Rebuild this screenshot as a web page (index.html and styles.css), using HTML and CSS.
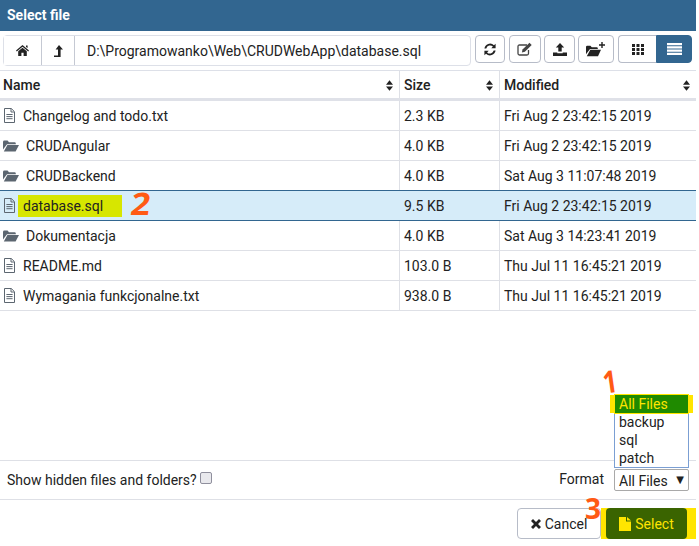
FILE: index.html
```html
<!DOCTYPE html>
<html lang="en">
<head>
<meta charset="utf-8">
<title>Select file</title>
<link rel="stylesheet" href="styles.css">
</head>
<body>
<svg class="defs" width="0" height="0">
  <symbol id="i-file" viewBox="0 0 13 15"><path d="M1.5.5h6.8l3.2 3.2v10.8h-10zM8 .8v3.2h3.2M3.400 6.500h6.200M3.400 8.600h6.200M3.400 10.700h6.200" fill="none" stroke="currentColor"/></symbol>
  <symbol id="i-folder" viewBox="0 0 16 12"><path d="M0 2Q0 .6 1.400.6h3.200l1.400 1.600h5.600q1.200 0 1.200 1.200v.8H4L0 9.600zM4.400 5H16l-3.400 6.600H.8z" fill="currentColor"/></symbol>
  <symbol id="i-sort" viewBox="0 0 8 12"><path d="M4 0l4 5H0zM4 12L0 7h8z" fill="currentColor"/></symbol>
</svg>
<main class="dialog">
  <header class="title">Select file</header>
  <div class="toolbar">
    <div class="path">
      <button class="seg home" aria-label="Home"><svg width="13" height="11" viewBox="0 0 13 11"><path d="M6.500 0L13 5.600l-.8.9-5.700-4.800L.8 6.500 0 5.600zM10 .5h1.600v2.600L10 2zM2.200 6.300l4.300-3.600 4.300 3.600V11H7.600V7.800H5.400V11H2.200z" fill="#222"/></svg></button>
      <button class="seg" aria-label="Up"><svg width="9" height="12" viewBox="0 0 9 12"><path d="M5 0l4 4.400H6.600V12H0v-1.600h4V4.400H1.600z" fill="#222"/></svg></button>
      <span class="path-text">D:\Programowanko\Web\CRUDWebApp\database.sql</span>
    </div>
    <button class="btn b-ref" aria-label="Refresh"><svg width="14" height="13" viewBox="0 0 14 13"><path d="M1.400 5.400A5.700 5.700 0 0 1 11 2.200L12.600.8v4.400H8.300l1.600-1.600A3.900 3.900 0 0 0 3.300 5.400zM12.600 7.600A5.700 5.700 0 0 1 3 10.800l-1.600 1.400V7.800h4.300L4.100 9.400A3.900 3.900 0 0 0 10.700 7.600z" fill="#222"/></svg></button>
    <button class="btn b-edit" aria-label="Edit"><svg width="16" height="14" viewBox="0 0 16 14"><path d="M10 3H2.500Q1 3 1 4.500v7Q1 13 2.500 13h7.500Q11.500 13 11.500 11.500V8" fill="none" stroke="#444" stroke-width="1.300"/><path d="M5.500 7.500L12.500.8l2.200 2.200-6.800 6.800-3 .8z" fill="#444"/></svg></button>
    <button class="btn b-up" aria-label="Upload"><svg width="14" height="13" viewBox="0 0 14 13"><path d="M7 0l4.200 4.400H8.700v4H5.300v-4H2.800zM0 9.400h4.300v.8h5.400v-.8H14V13H0z" fill="#222"/></svg></button>
    <button class="btn b-new" aria-label="New folder"><svg width="20" height="15" viewBox="0 0 20 15"><path d="M0 5Q0 3.800 1.200 3.800h3.200L5.800 5.200h5q1 0 1 1v.7H4L0 12.300zM4.300 7.800H15l-3 6.400H.8z" fill="#222"/><path d="M15.300 0h1.400v2.300H19v1.400h-2.300V6h-1.400V3.700H13V2.300h2.300z" fill="#222"/></svg></button>
    <div class="toggle">
      <button class="tg" aria-label="Grid"><svg width="12" height="11" viewBox="0 0 12 11"><path d="M0 0h3v3H0zM4.500 0h3v3h-3zM9 0h3v3H9zM0 4h3v3H0zM4.500 4h3v3h-3zM9 4h3v3H9zM0 8h3v3H0zM4.500 8h3v3h-3zM9 8h3v3H9z" fill="#222"/></svg></button>
      <button class="tg on" aria-label="List"><svg width="15" height="12" viewBox="0 0 15 12"><path d="M0 0h15v2.300H0zM0 3.200h15v2.300H0zM0 6.500h15v2.300H0zM0 9.700h15V12H0z" fill="#fff"/></svg></button>
    </div>
  </div>
  <div class="table">
    <div class="row head">
      <div class="c name">Name<svg class="sort"><use href="#i-sort"/></svg></div>
      <div class="c size">Size<svg class="sort"><use href="#i-sort"/></svg></div>
      <div class="c mod">Modified<svg class="sort"><use href="#i-sort"/></svg></div>
    </div>
    <div class="row"><div class="c name"><svg class="fi"><use href="#i-file"/></svg>Changelog and todo.txt</div><div class="c size">2.3 KB</div><div class="c mod">Fri Aug 2 23:42:15 2019</div></div>
    <div class="row"><div class="c name"><svg class="fo"><use href="#i-folder"/></svg>CRUDAngular</div><div class="c size">4.0 KB</div><div class="c mod">Fri Aug 2 23:42:15 2019</div></div>
    <div class="row"><div class="c name"><svg class="fo"><use href="#i-folder"/></svg>CRUDBackend</div><div class="c size">4.0 KB</div><div class="c mod">Sat Aug 3 11:07:48 2019</div></div>
    <div class="row sel"><div class="c name"><svg class="fi"><use href="#i-file"/></svg><span class="hl">database.sql</span><span class="mark m2">2</span></div><div class="c size">9.5 KB</div><div class="c mod">Fri Aug 2 23:42:15 2019</div></div>
    <div class="row"><div class="c name"><svg class="fo"><use href="#i-folder"/></svg>Dokumentacja</div><div class="c size">4.0 KB</div><div class="c mod">Sat Aug 3 14:23:41 2019</div></div>
    <div class="row"><div class="c name"><svg class="fi"><use href="#i-file"/></svg>README.md</div><div class="c size">103.0 B</div><div class="c mod">Thu Jul 11 16:45:21 2019</div></div>
    <div class="row"><div class="c name"><svg class="fi"><use href="#i-file"/></svg>Wymagania funkcjonalne.txt</div><div class="c size">938.0 B</div><div class="c mod">Thu Jul 11 16:45:21 2019</div></div>
  </div>
  <div class="options">
    <label class="hidden-opt">Show hidden files and folders?<span class="check"></span></label>
    <div class="format">
      <span>Format</span>
      <div class="select">All Files<i class="caret">▼</i>
        <span class="mark m1">1</span>
        <ul class="list">
          <li class="cur">All Files</li><li>backup</li><li>sql</li><li>patch</li>
        </ul>
      </div>
    </div>
  </div>
  <footer class="foot">
    <button class="cancel"><svg width="10" height="10" viewBox="0 0 10 10"><path d="M2 0l3 3 3-3 2 2-3 3 3 3-2 2-3-3-3 3-2-2 3-3-3-3z" fill="#222"/></svg>Cancel</button>
    <div class="sel-wrap"><span class="mark m3">3</span><button class="select-btn"><svg width="12" height="14" viewBox="0 0 12 14"><path d="M0 0h7v4.500h5V14H0zM8 0l4 3.500H8z" fill="#ffe500"/></svg>Select</button></div>
  </footer>
</main>
</body>
</html>
```
FILE: styles.css
```css
* { box-sizing: border-box; }
html, body { margin: 0; padding: 0; background: #fff; }
body { font: 14px/20px Roboto, "Liberation Sans", sans-serif; color: #222; width: 699px; height: 546px; overflow: hidden; }
.defs { position: absolute; }
.dialog { width: 696px; height: 546px; display: flex; flex-direction: column; }
button { font: inherit; padding: 0; margin: 0; background: #fff; color: inherit; display: flex; align-items: center; justify-content: center; }

.title { height: 31px; flex: none; background: #326690; color: #fff; font-weight: 700; padding: 5px 7px; }

.toolbar { height: 40px; flex: none; display: flex; align-items: flex-start; padding: 4px 0 0 3px; border-bottom: 1px solid #dde0e8; }
.path { width: 468px; height: 31px; flex: none; display: flex; align-items: stretch; border: 1px solid #dde0e8; border-radius: 4px; }
.seg { width: 33px; border: 0; border-right: 1px solid #c5c9d3; }
.seg.home { width: 38px; }
.path-text { padding: 5px 12px; white-space: nowrap; }
.btn { height: 28px; flex: none; border: 1px solid #b7bcc8; border-radius: 4px; }
.b-ref { width: 30px; margin-left: 4px; }
.b-edit { width: 32px; margin-left: 4px; }
.b-up { width: 31px; margin-left: 3px; }
.b-new { width: 36px; margin-left: 3px; }
.toggle { display: flex; height: 28px; margin-left: 4px; }
.tg { width: 38px; border: 1px solid #b7bcc8; border-right: 0; border-radius: 4px 0 0 4px; }
.tg.on { width: 36px; background: #326690; border: 1px solid #326690; border-radius: 0 4px 4px 0; }

.table { flex: none; }
.row { display: flex; height: 30px; border-bottom: 1px solid #dee0e6; }
.row.head { height: 30px; border-bottom: 3px solid #dfe1e8; font-weight: 500; color: #222; }
.c { display: flex; align-items: center; padding: 0 4px; border-right: 1px solid #dee0e6; position: relative; white-space: nowrap; }
.name { width: 400px; padding-left: 3px; }
.size { width: 100px; }
.mod { width: 196px; border-right: 0; }
.sort { position: absolute; right: 6px; top: 9px; width: 7px; height: 11px; color: #222; }
.fi { width: 13px; height: 15px; margin-right: 7px; color: #5c6670; flex: none; }
.fo { width: 16px; height: 12px; margin-right: 7px; color: #5c6670; flex: none; }
.row.sel { background: #d6ecf9; border-bottom-color: #326690; box-shadow: 0 -1px 0 #326690; position: relative; }
.row.sel .c { border-right-color: transparent; }
.hl { background: #d7e600; margin-left: -5px; padding: 0 19px 0 5px; height: 22px; line-height: 22px; }

.mark { position: absolute; color: #ff5a14; font: 700 31px/30px "Open Sans", sans-serif; }
.m1 { left: -14px; top: -104px; transform: rotate(-8deg) scaleX(.8); }
.m2 { left: 132px; top: -3px; transform: skewX(-8deg) scaleX(1.1); }
.m3 { left: -16px; top: -15px; font-size: 28px; }

.options { margin-top: 149px; height: 40px; flex: none; display: flex; justify-content: space-between; align-items: center; padding: 0 7px; border-top: 1px solid #dee0e6; border-bottom: 1px solid #dee0e6; }
.hidden-opt { display: flex; align-items: center; }
.check { width: 12px; height: 12px; background: #e9e9ed; border: 1px solid #8f8f9d; border-radius: 2px; margin: -4px 0 0 3px; }
.format { display: flex; align-items: center; gap: 10px; margin-top: -2px; }
.select { position: relative; width: 75px; height: 22px; border: 1px solid #a9a9a9; border-radius: 2px; padding: 1px 4px; margin-top: 2px; background: #fff; }
.caret { position: absolute; right: 4px; top: 1px; font: 10px/18px "DejaVu Sans", sans-serif; color: #222; }
.list { position: absolute; left: -1px; bottom: 22px; width: 75px; margin: 0; padding: 0; list-style: none; background: #fff; border: 1px solid #7b9fd3; line-height: 18px; }
.list li { padding: 0 4px; height: 18px; }
.list .cur { background: #1f8a00; color: #ffe500; outline: 1px solid #ffe500; box-shadow: -5px 0 0 #ffe500, 5px 0 0 #ffe500; }

.foot { height: 46px; flex: none; display: flex; justify-content: flex-end; align-items: flex-start; padding-top: 8px; }
.cancel { width: 84px; height: 31px; border: 1px solid #b7bcc8; border-radius: 4px; gap: 4px; }
.sel-wrap { position: relative; background: #ffe500; padding: 0 9px 0 5px; height: 31px; }
.select-btn { width: 81px; height: 31px; border: 0; border-radius: 4px; background: #3a6400; color: #ffe500; gap: 4px; }
```
